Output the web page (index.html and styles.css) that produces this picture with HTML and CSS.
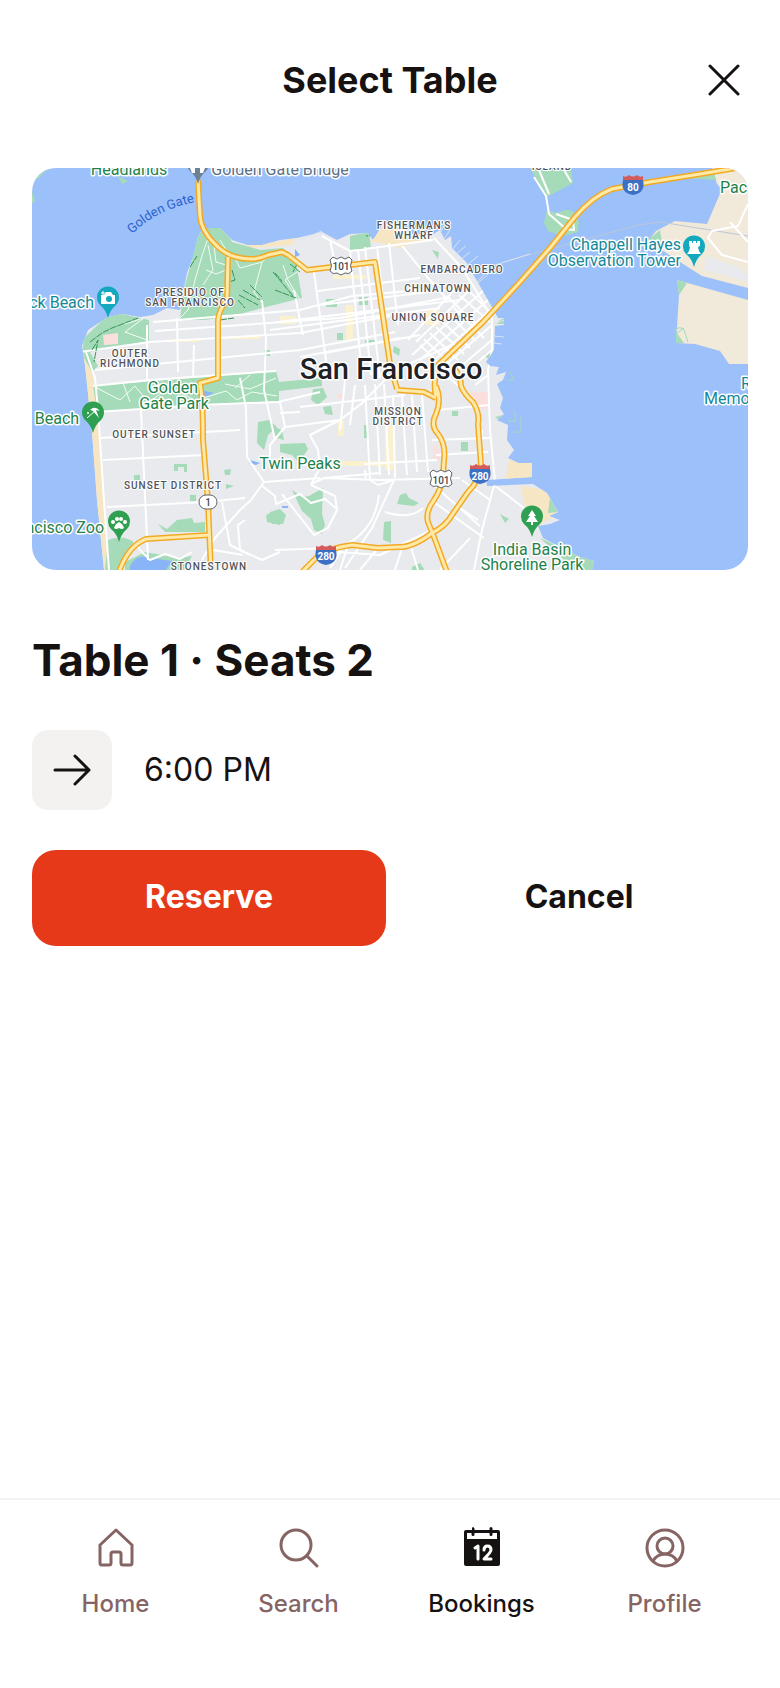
FILE: index.html
```html
<!DOCTYPE html>
<html lang="en">
<head>
<meta charset="utf-8">
<meta name="viewport" content="width=device-width, initial-scale=1">
<title>Select Table</title>
<link rel="stylesheet" href="styles.css">
</head>
<body>
<header class="topbar">
  <h1 class="topbar-title">Select Table</h1>
  <button class="close" type="button" aria-label="Close">
    <svg class="icon-close" viewBox="0 0 32 32" aria-hidden="true"><path d="M2 2 30 30M30 2 2 30"/></svg>
  </button>
</header>

<main class="content">
  <svg class="map" viewBox="32 168 716 402" role="img" aria-label="Map of San Francisco">
    <defs>
      <path id="sf" d="M104 570 97 500 92 432 85 365 82 346 88 330 108 317 122 314 140 317 153 315 167 308 180 310 183 293 187 273 193 257 198 237 203 228 220 228 232 240 247 245 262 245 280 240 297 238 322 232 337 240 350 234 368 233 373 240 384 223 396 220 412 234 432 235 440 230 445 240 451 236 452 248 466 262 477 281 492 307 498 318 504 318 504 325 495 326 494 350 486 362 490 366 499 367 496 375 506 372 503 380 497 384 503 398 500 408 504 414 497 420 508 425 507 440 514 450 508 458 518 463 532 463 532 477 487 480 487 486 533 484 547 493 558 512 549 516 560 520 550 524 538 526 543 538 560 547 580 557 594 561 592 570Z"/>
      <clipPath id="sf-clip"><use href="#sf"/></clipPath>
      <path id="gate-line" d="M132 234Q160 206 208 200"/>
      <g id="highways">
        <path d="M198 180 200 216Q201 230 214 243 224 254 236 257 254 262 268 255L282 252 288 255 307 270 375 262 390 364 397 389"/>
        <path d="M397 390 424 392 436 398M436 396Q433 386 437 366L483 322 520 282 550 248 575 217Q593 196 612 189L650 182 700 174 736 168"/>
        <path d="M436 386Q442 400 436 414 430 425 438 434 446 444 444 460L443 475Q442 488 434 500 425 512 428 522L434 537 447 572"/>
        <path d="M452 366Q461 374 461 386 464 394 473 402 480 413 478 424L481 465Q480 480 468 492L452 515Q446 526 432 533 412 548 398 547L378 548 352 545Q328 548 316 558L302 572"/>
        <path d="M228 257 227 300Q219 310 218 320L218 378 200 383Q203 400 203 440L208 502 211 572"/>
        <path d="M209 535 146 539Q128 546 119 572"/>
      </g>
      <g id="interstate">
        <path class="shield-blue" d="M-10-4H10Q13 9 0 11-13 9-10-4Z"/>
        <path class="shield-red" d="M-10-4-10-8Q-7-6-4-9 0-6 4-9 7-6 10-8L10-4Z"/>
      </g>
      <path id="us-route" d="M-8-9-4-7 0-9 4-7 8-9 11-6Q8 0 11 5 8 9 4 7L0 9-4 7Q-8 9-11 5-8 0-11-6Z"/>
      <path id="pin" d="M0 17Q-2 9-8 4A11 11 0 1 1 8 4Q2 9 0 17Z"/>
    </defs>

    <rect class="water" x="32" y="168" width="716" height="402"/>
    <g class="east-land">
      <path d="M712 168 717 184 722 189 707 224 675 221 656 231 648 241 680 262 702 276 748 288V168Z"/>
      <path d="M677 280 748 300V364H729L720 351 695 344 676 343 679 295Z"/>
    </g>
    <path class="urban" d="M706 256 740 268 748 276V282L704 270Z"/>
    <g class="park">
      <path d="M530 168H571L573 183 547 197Z"/>
      <path d="M547 210 556 213 566 210 573 211 579 222 578 232 563 236 548 231 544 223Z"/>
      <path d="M648 240 660 230 662 242ZM677 280 687 283 679 295ZM676 332 684 343H676ZM680 178 714 172 716 180 700 179ZM32 192 35 200 32 204ZM118 176 128 181 122 184ZM32 168H48L40 177 32 182Z"/>
    </g>
    <path class="trail" d="M510 260 638 225 660 222 748 236"/>
    <use class="land" href="#sf"/>
    <g clip-path="url(#sf-clip)">
      <path class="sand" d="M82 352 90 352 100 440 108 570H101L82 370ZM370 242 384 222 404 224 430 238 400 248 380 243ZM232 237 256 245 296 238 292 245 250 248ZM510 455H535V480H505ZM520 486 545 490 560 514 540 524 525 505Z"/>
      <g class="park">
        <path d="M180 320 183 293 198 237 203 226 224 228 232 242 260 250 283 248 296 262 302 298 270 306 240 314 205 320Z"/>
        <path d="M82 354 84 338 108 315 122 314 149 320V341L90 352 98 366 92 372Z"/>
        <path d="M93 386 276 371 279 382 322 378V386L279 391V401L97 411Z"/>
        <path d="M350 236 369 232 371 247 350 251ZM432 250 439 252 438 259ZM326 299H337V307H326ZM359 297H368V305H359ZM337 333H343V340H337ZM365 340H375V343H365ZM394 346 400 349 399 356 393 352ZM500 320 504 318V324H497ZM484 355 493 350V363ZM452 411H458V416H452ZM461 442H468V451H461ZM364 425H368V438H364Z"/>
        <path d="M258 422 269 420 277 427 268 435 264 450 257 443ZM313 389 323 388 327 397 318 405 311 400ZM323 407 331 406 333 415 325 414ZM270 425 282 430 284 440 276 438ZM280 444 305 443 308 449 299 463 292 455 280 452ZM292 490 302 497 309 496 323 488 322 514 325 525 322 534 314 530 311 519 302 511ZM270 512 280 509 286 515 283 524 272 524ZM400 495 406 493 409 498 419 503 414 506 397 504ZM384 522 391 521 391 543 383 540ZM500 514 509 519 505 523ZM174 464H187V472H184V467H178V471H174ZM134 475H140V480H134ZM224 470 231 469 230 475 225 475ZM226 484 234 486 226 489ZM190 495H196V501H190ZM158 524 167 529 177 520 192 518 194 523 205 522V532H165ZM266 515 280 509V525L267 522ZM412 567 420 563 426 572H412Z"/>
        <path d="M108 540Q122 534 134 542L122 570H105ZM264 350H270V356H264ZM125 562 145 552 180 558 192 556 184 570H125ZM540 538 560 547 595 560V570H575ZM495 417 503 415V423ZM550 497 558 512 548 513Z"/>
      </g>
      <g class="blue">
        <path d="M130 566Q137 553 151 558L172 561 166 570H130ZM250 460 260 463 256 465 249 463ZM200 390 214 393 204 398ZM486 483 520 479V483L490 486ZM295 249 300 255 295 257ZM282 506H288V508H282Z"/>
      </g>
      <path class="blush" d="M103 335 118 333V344L104 345ZM470 392 488 392V408L478 410ZM434 444 440 450 440 462 433 458ZM338 394H344V399H338Z"/>
      <path class="commercial" d="M172 339H199V342H172ZM228 336H260V339H228ZM385 425H393V470H385ZM335 461H385V466H335ZM346 305H353V340H346ZM426 310H440V325H426ZM280 316H296V324H280ZM338 420H344V436H338ZM333 275H366V279H333Z"/>
      <g class="streets">
        <path d="M80 352 150 342 300 333 390 316M95 370 300 350 395 332M93 386 150 380 276 371M97 412 200 405 278 402 320 392M100 438 240 430M103 460 204 455M107 507 205 502 245 498M153 322 300 310 352 296 420 290M155 331 340 318 445 298M318 291 420 278M320 305 445 290M270 323 460 300M270 330 440 308M300 357 400 338M325 353 420 335"/>
        <path d="M86 352 95 378 98 410 104 500 109 570M177 318 178 372M147 325 147 380M141 410 148 560M193 378 194 345M240 378 246 408M246 408 247 457M294 290 303 335M314 272 328 375M330 240 337 272M350 251 362 375M358 249 371 375M365 247 380 378M377 246 383 300M389 243 398 325M400 243 428 278 448 300M322 236 350 251 433 240M434 238 462 268 478 294 492 318 492 350 488 370 490 430 495 482 482 530 474 570"/>
        <path d="M262 300 266 340 264 390 275 440M247 457 264 482 251 500 240 510 215 538 202 560M264 482 320 478M261 485 275 496 276 504 300 494 311 503 325 499 338 510M245 520 238 525 240 550 262 560 280 552M300 412 280 413M280 402 285 427 270 445 270 465M285 427 340 420 361 404 395 370 452 345M340 420 310 435 318 450 320 468 311 484 324 478 380 473M311 485 335 496 337 510 328 528 314 535 282 494M324 478 380 480 460 478M300 407 405 395M345 380 340 430M355 385 350 425M365 385 370 480 378 485M375 384 380 475M384 384 389 475M393 395 395 478M402 395 407 475M412 395 417 472M422 395 428 472M364 464 437 460M366 480 365 470M378 485 394 480 372 528 345 568M338 552 380 555 432 530M379 495Q375 530 345 545L332 558M385 512Q410 520 423 508M430 482 480 526M431 500 484 538M455 505 478 520M462 480 490 500M436 410 490 405M432 440 490 438M436 455 488 452M480 472 482 430M485 478 520 505 540 522"/>
        <path d="M134 542 142 552 150 560 165 554 180 559 192 552M211 522 212 560 222 570M222 502 230 545 250 555M213 550 243 555M318 560 300 570M275 550 332 548M340 570 348 545M330 568 340 553M378 548 360 570M402 548 395 570M411 547 418 570M440 570 470 538"/>
        <path d="M420 345 444 368M424 339 450 364M430 333 458 360M436 327 464 354M442 321 470 348M448 314 476 341M454 308 484 338M447 296 476 325M459 295 490 322M466 288 492 314M412 355 484 290M420 360 488 300M430 364 490 310M442 368 492 325M454 372 492 340M462 375 492 350M475 385 488 375M440 370 475 400M416 342 470 290M408 340 458 286"/>
      </g>
      <g class="paths">
        <path d="M208 238 202 256 195 280 188 310 180 318M220 240 226 250M208 245 213 270 203 285M214 245 216 262 226 265M235 258 240 268 262 262 254 292 262 303M262 262 270 255M283 265 288 280 300 300M125 324 144 318 125 332 147 340M97 388 120 400 135 386 148 402 170 388 193 399M203 398 226 391 237 400 252 392 277 396M225 384 250 389 276 378M122 380 130 402M250 375 235 388M303 268 285 280 293 292M206 270 216 274 226 270"/>
      </g>
      <path class="trees" d="M90 342 102 333 112 328 125 323 138 318M92 350 98 340 94 362M190 267 197 256M232 270 235 280 229 282M239 295 258 305M243 290 260 300M250 285 262 297M238 300 245 308M220 320 234 318M275 273 282 281M275 290 296 298M273 272 293 296M290 264 300 272M298 262 293 272M376 235 366 236"/>
    </g>
    <path class="streets" d="M534 177 546 196 549 214 566 229 574 230 573 220 556 214M539 170 549 194M563 168 571 182M748 204 738 226 712 231 708 238 722 255 748 262M730 222 748 242"/>
    <path class="piers" d="M438 237 444 226M444 239 450 230M452 250 460 240M456 254 466 246M460 260 470 252M466 266 478 256M472 274 482 266M477 284 488 274M494 324 504 320M494 336 504 337M494 343 502 344M300 240 322 231M477 282 492 266 530 254"/>
    <path class="shoals" d="M515 411V421H508M521 416V432H514M673 331Q680 325 684 330L688 342M676 334 684 328M510 372 514 380H508"/>
    <use class="road-edge" href="#highways"/>
    <use class="road-fill" href="#highways"/>

    <g class="tag">
      <use class="route" href="#us-route" x="341" y="266"/><text x="341" y="270">101</text>
      <use class="route" href="#us-route" x="441" y="479"/><text x="441" y="484">101</text>
      <rect class="route" x="199" y="495" width="18" height="14" rx="7"/><text x="208" y="506">1</text>
    </g>
    <g class="tag tag-interstate">
      <use href="#interstate" x="633" y="184"/><text x="633" y="191">80</text>
      <use href="#interstate" x="480" y="473"/><text x="480" y="480">280</text>
      <use href="#interstate" x="326" y="554"/><text x="326" y="560">280</text>
    </g>

    <use class="pin-gray" href="#pin" x="198" y="167"/>
    <path class="glyph" d="M190 168H195V173H192ZM200 168H205L203 173H200Z"/>
    <use class="pin-teal" href="#pin" x="108" y="301"/>
    <path class="glyph" d="M101 295H104L106 292H111L113 295H115V304H101Z"/><circle class="pin-teal" cx="109" cy="299" r="3"/><path class="glyph-line" d="M101 293H105M103 291V295"/>
    <use class="pin-teal" href="#pin" x="694" y="250"/>
    <path class="glyph" d="M689 241H692V243H693V241H696V243H697V241H700V246L698 247 699 251 701 254H687L689 251 690 247 689 246Z"/>
    <use class="pin-green" href="#pin" x="93" y="416"/>
    <path class="glyph" d="M90 410Q95 405 100 411L96 410 99 418 93 411Z"/><path class="glyph-line" d="M95 411 87 418"/><circle class="glyph" cx="88" cy="413" r="1"/>
    <use class="pin-green" href="#pin" x="119" y="525"/>
    <path class="glyph" d="M119 522Q123 524 124 528 122 530 119 528 116 530 114 528 115 524 119 522Z"/><g class="glyph"><circle cx="113" cy="522" r="2"/><circle cx="117" cy="519" r="2"/><circle cx="121" cy="519" r="2"/><circle cx="125" cy="522" r="2"/></g>
    <use class="pin-green" href="#pin" x="532" y="520"/>
    <path class="glyph" d="M532 510 536 516H534L538 522H533V525H531V522H526L530 516H528Z"/>

    <g class="place green">
      <text x="129" y="175">Headlands</text>
      <text class="from-left" x="720" y="193">Pac</text>
      <text x="173" y="393">Golden</text>
      <text x="174" y="409">Gate Park</text>
      <text x="57" y="424">Beach</text>
      <text x="300" y="469">Twin Peaks</text>
      <text class="from-right" x="104" y="533">ncisco Zoo</text>
      <text x="532" y="555">India Basin</text>
      <text x="532" y="570">Shoreline Park</text>
    </g>
    <g class="place slate"><text x="280" y="175">Golden Gate Bridge</text></g>
    <g class="place teal">
      <text class="from-right" x="94" y="308">ck Beach</text>
      <text class="from-right" x="681" y="250">Chappell Hayes</text>
      <text class="from-right" x="681" y="266">Observation Tower</text>
      <text class="from-left" x="741" y="389">R</text>
      <text class="from-left" x="704" y="404">Memo</text>
    </g>
    <text class="strait"><textPath href="#gate-line">Golden Gate</textPath></text>
    <g class="district">
      <text x="552" y="170">ISLAND</text>
      <text x="414" y="229">FISHERMAN'S</text>
      <text x="414" y="239">WHARF</text>
      <text x="462" y="273">EMBARCADERO</text>
      <text x="438" y="292">CHINATOWN</text>
      <text x="433" y="321">UNION SQUARE</text>
      <text x="190" y="296">PRESIDIO OF</text>
      <text x="190" y="306">SAN FRANCISCO</text>
      <text x="130" y="357">OUTER</text>
      <text x="130" y="367">RICHMOND</text>
      <text x="154" y="438">OUTER SUNSET</text>
      <text x="173" y="489">SUNSET DISTRICT</text>
      <text x="209" y="570">STONESTOWN</text>
      <text x="398" y="415">MISSION</text>
      <text x="398" y="425">DISTRICT</text>
    </g>
    <text class="city" x="391" y="379">San Francisco</text>
  </svg>

  <h2 class="table-name">Table 1 · Seats 2</h2>
  <div class="slot">
    <span class="slot-icon">
      <svg class="icon-arrow" viewBox="0 0 40 40" aria-hidden="true"><path d="M3 20H37M23 6 37 20 23 34"/></svg>
    </span>
    <p class="slot-time">6:00 PM</p>
  </div>
  <div class="actions">
    <button class="button button-primary" type="button">Reserve</button>
    <button class="button button-plain" type="button">Cancel</button>
  </div>
</main>

<nav class="tabs" aria-label="Main">
  <a class="tab" href="#home">
    <svg class="tab-icon" viewBox="0 0 48 48" aria-hidden="true"><path d="M24 6 40 21V39Q40 41 38 41H31Q29 41 29 39V30Q29 28 27 28H21Q19 28 19 30V39Q19 41 17 41H10Q8 41 8 39V21Z"/></svg>
    <span>Home</span>
  </a>
  <a class="tab" href="#search">
    <svg class="tab-icon" viewBox="0 0 48 48" aria-hidden="true"><circle cx="21" cy="21" r="15"/><path d="M32 32 42 42"/></svg>
    <span>Search</span>
  </a>
  <a class="tab tab-current" href="#bookings" aria-current="page">
    <svg class="tab-icon" viewBox="0 0 48 48" aria-hidden="true"><path class="solid" d="M8 6H14V4.500Q14 3 15 3T16.500 4.500V6H31.500V4.500Q31.500 3 33 3T34.500 4.500V6H40Q42 6 42 8V40Q42 42 40 42H8Q6 42 6 40V8Q6 6 8 6ZM9 9V15H39V9H34.500V10.500Q34.500 12 33 12T31.500 10.500V9H16.500V10.500Q16.500 12 15 12T13.500 10.500V9Z"/><path class="date" d="M17 24 20 22V35M26 26Q26 22 29.500 22T33 26Q33 28 26 35H33"/></svg>
    <span>Bookings</span>
  </a>
  <a class="tab" href="#profile">
    <svg class="tab-icon" viewBox="0 0 48 48" aria-hidden="true"><circle cx="24" cy="24" r="18"/><circle cx="24" cy="22" r="8"/><path d="M12 37Q16 30 24 30T36 37"/></svg>
    <span>Profile</span>
  </a>
</nav>
</body>
</html>
```

FILE: styles.css
```css
* { box-sizing: border-box; }

body {
  display: flex;
  flex-direction: column;
  min-height: 100vh;
  margin: 0;
  background: #fff;
  color: #171212;
  font-family: Inter, "Liberation Sans", sans-serif;
}

h1, h2, p { margin: 0; }

button {
  padding: 0;
  border: 0;
  background: none;
  color: inherit;
  font: inherit;
  cursor: pointer;
}

svg { display: block; }

.topbar {
  display: grid;
  grid-template-columns: 96px 1fr 96px;
  align-items: center;
  padding: 32px 8px 16px;
}

.topbar-title {
  grid-column: 2;
  font-size: 36px;
  font-weight: 700;
  line-height: 48px;
  text-align: center;
}

.close {
  display: grid;
  place-items: center;
  height: 96px;
}

.icon-close { width: 32px; height: 32px; }

.icon-close, .icon-arrow {
  fill: none;
  stroke: #171212;
  stroke-width: 3;
  stroke-linecap: round;
  stroke-linejoin: round;
}

.content {
  flex: 1;
  padding: 24px 32px 32px;
}

.map {
  width: 100%;
  height: auto;
  border-radius: 24px;
  overflow: hidden;
  font-family: Roboto, "Liberation Sans", sans-serif;
}

.table-name {
  margin-top: 60px;
  font-size: 44px;
  font-weight: 700;
  line-height: 60px;
}

.slot {
  display: flex;
  align-items: center;
  gap: 32px;
  margin-top: 40px;
}

.slot-icon {
  display: grid;
  place-items: center;
  width: 80px;
  height: 80px;
  border-radius: 16px;
  background: #f3f2f1;
}

.icon-arrow { width: 40px; height: 40px; }

.slot-time {
  font-size: 32px;
  line-height: 48px;
}

.actions {
  display: grid;
  grid-template-columns: 1fr 1fr;
  gap: 8px;
  margin-top: 40px;
}

.button {
  height: 96px;
  padding-bottom: 4px;
  border-radius: 24px;
  font-size: 32px;
  font-weight: 700;
}

.button-primary {
  background: #e63919;
  color: #fff;
}

.button-plain { margin-left: 16px; }

.tabs {
  display: grid;
  grid-template-columns: repeat(4, 1fr);
  padding: 24px 24px 64px;
  border-top: 2px solid #f3f1f1;
}

.tab {
  display: flex;
  flex-direction: column;
  align-items: center;
  gap: 12px;
  color: #876464;
  font-size: 24px;
  font-weight: 500;
  line-height: 40px;
  text-decoration: none;
}

.tab-current { color: #171212; }

.tab-icon {
  width: 48px;
  height: 48px;
  fill: none;
  stroke: currentColor;
  stroke-width: 3;
  stroke-linecap: round;
  stroke-linejoin: round;
}

.solid { fill: currentColor; stroke: none; }
.date { stroke: #fff; }

/* Map surfaces */
.water { fill: #9cc0f9; }
.land { fill: #e8eaed; }
.urban { fill: #e8eaed; }
.east-land { fill: #f1e9d9; }
.park { fill: #a5dbb8; }
.sand { fill: #f7e6c4; }
.blue { fill: #8ab4f8; }
.blush { fill: #fadfdc; }
.commercial { fill: #fbf1cf; }

/* Map lines */
.streets, .paths, .trail, .trees, .piers, .shoals, .road-edge, .road-fill {
  fill: none;
  stroke-linejoin: round;
}

.streets { stroke: #fff; stroke-width: 2; }
.paths { stroke: #f4fbf6; stroke-width: 1; }
.trail { stroke: #bcc6d8; stroke-width: 1; }
.trees { stroke: #36945a; stroke-width: 1; stroke-dasharray: 7 1; }
.piers { stroke: #dbe4f0; stroke-width: 1; }
.shoals { stroke: #a5dbb8; stroke-width: 1; }
.road-edge { stroke: #f2aa26; stroke-width: 6; }
.road-fill { stroke: #ffe9a6; stroke-width: 3; }

/* Route markers and pins */
.tag {
  fill: #45494d;
  font-size: 10px;
  font-weight: 500;
  text-anchor: middle;
}

.tag-interstate { fill: #fff; font-weight: 700; }
.route { fill: #fff; stroke: #5f6368; stroke-width: 1; }
.shield-blue { fill: #3c70c4; }
.shield-red { fill: #d55b5b; }
.pin-gray { fill: #6c8194; }
.pin-teal { fill: #12a8bd; }
.pin-green { fill: #2fa051; }
.glyph { fill: #fff; }
.glyph-line { fill: none; stroke: #fff; stroke-width: 1; }

/* Map names */
.place, .district, .city {
  paint-order: stroke;
  stroke: #fff;
  stroke-width: 3;
  stroke-linejoin: round;
  text-anchor: middle;
}

.place { font-size: 16px; }
.green { fill: #22834a; }
.teal { fill: #14889a; }
.slate { fill: #5c7086; }
.from-left { text-anchor: start; }
.from-right { text-anchor: end; }
.strait { fill: #2d62cf; font-size: 13px; }

.district {
  fill: #505357;
  stroke-width: 2;
  font-size: 10px;
  font-weight: 500;
  letter-spacing: 1px;
}

.city { fill: #202124; font-size: 29px; font-weight: 500; }
```
